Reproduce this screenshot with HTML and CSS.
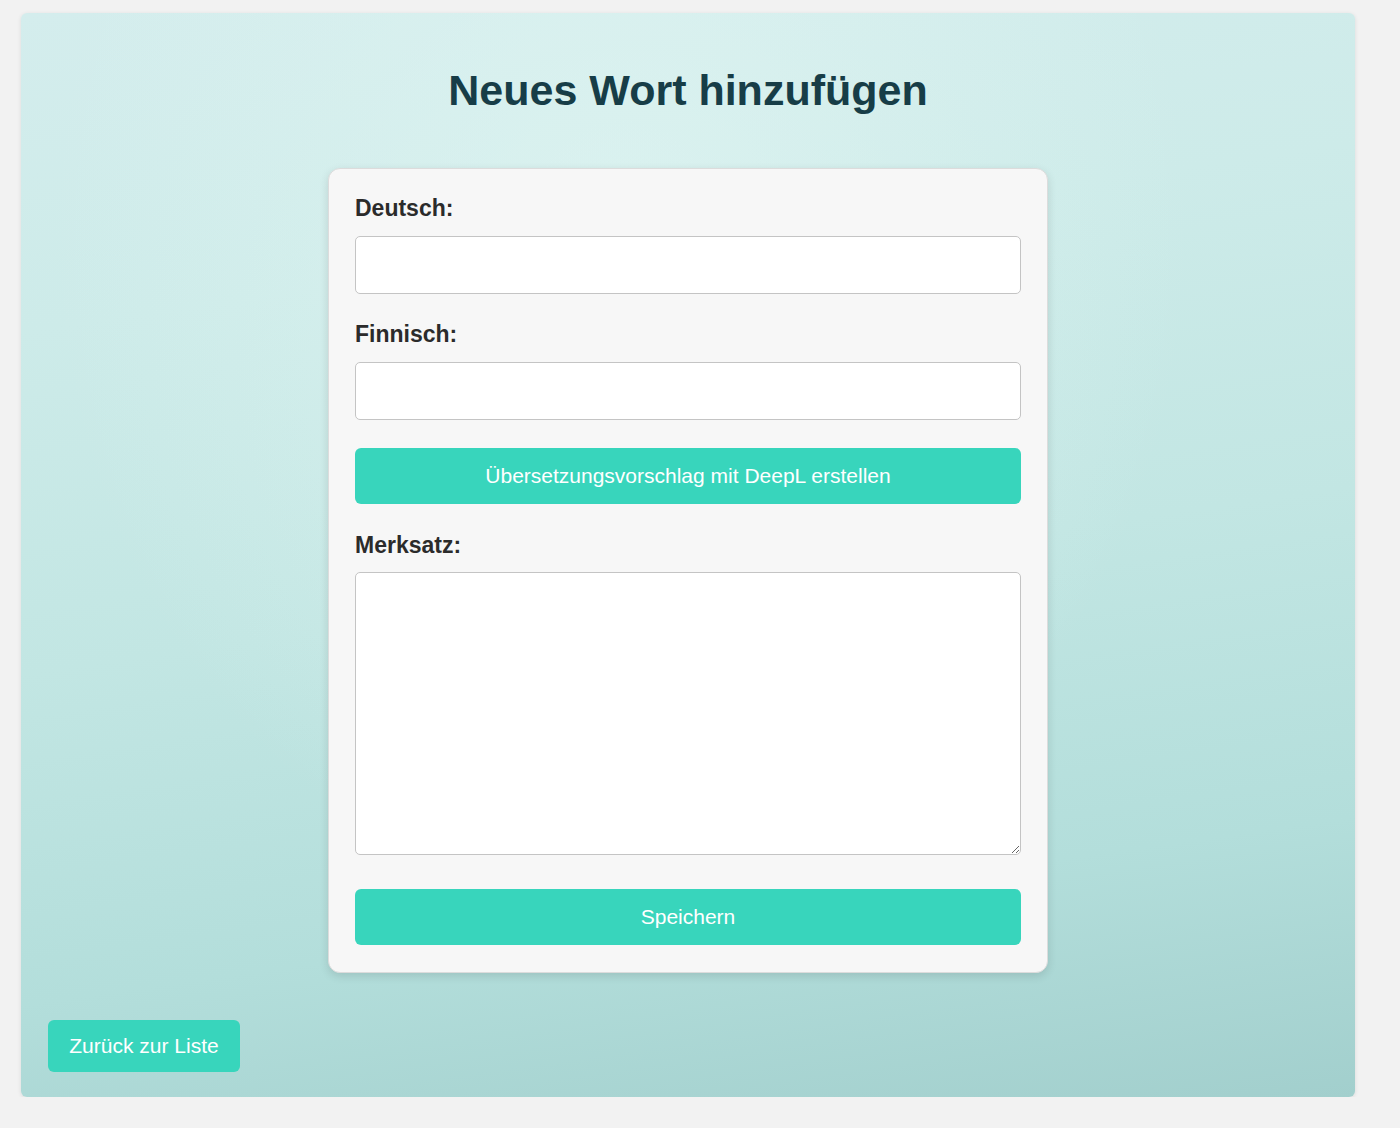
FILE: index.html
```html
<!DOCTYPE html>
<html lang="de">
<head>
<meta charset="utf-8">
<title>Neues Wort hinzufügen</title>
<link rel="stylesheet" href="styles.css">
</head>
<body>
<div class="page">
  <h1 class="title">Neues Wort hinzufügen</h1>
  <form class="card">
    <div class="group">
      <label class="label" for="de">Deutsch:</label>
      <input class="field" id="de" type="text">
    </div>
    <div class="group">
      <label class="label" for="fi">Finnisch:</label>
      <input class="field" id="fi" type="text">
    </div>
    <button class="btn btn-wide btn-deepl" type="button">Übersetzungsvorschlag mit DeepL erstellen</button>
    <div class="group group-text">
      <label class="label label-text" for="ms">Merksatz:</label>
      <textarea class="field area" id="ms"></textarea>
    </div>
    <button class="btn btn-wide" type="submit">Speichern</button>
  </form>
  <div class="footer">
    <a class="btn btn-back" href="#">Zurück zur Liste</a>
  </div>
</div>
</body>
</html>
```

FILE: styles.css
```css
html, body {
  margin: 0;
  padding: 0;
}
body {
  background: #f2f2f2;
  font-family: "Liberation Sans", Arial, sans-serif;
  padding: 13px 0 0 21px;
}
.page {
  width: 1334px;
  height: 1084px;
  box-sizing: border-box;
  border-radius: 6px;
  background:
    radial-gradient(ellipse at 45% 20%, rgba(226, 246, 243, 0.6), rgba(226, 246, 243, 0) 55%),
    linear-gradient(172deg, #d4eded 0%, #cdebe9 25%, #c2e6e3 52%, #b3dedb 78%, #a2cfcd 100%);
  box-shadow: 0 1px 4px rgba(0, 0, 0, 0.1);
  padding: 53px 27px 25px;
  display: flex;
  flex-direction: column;
}
.title {
  margin: 0;
  text-align: center;
  font-size: 43px;
  line-height: 48px;
  font-weight: bold;
  color: #173d47;
}
.card {
  align-self: center;
  width: 720px;
  box-sizing: border-box;
  margin-top: 54px;
  padding: 26px 26px 27px;
  background: #f7f7f7;
  border-radius: 12px;
  border: 1px solid #dcdcdc;
  box-shadow: 0 3px 10px rgba(0, 0, 0, 0.12);
  display: flex;
  flex-direction: column;
}
.group {
  display: flex;
  flex-direction: column;
  margin-bottom: 27px;
}
.group-text {
  margin-bottom: 34px;
}
.label {
  font-size: 23px;
  line-height: 26px;
  font-weight: bold;
  color: #2b2b2b;
  margin-bottom: 15px;
}
.label-text {
  margin-bottom: 14px;
}
.field {
  display: block;
  height: 58px;
  box-sizing: border-box;
  border: 1px solid #c4c4c4;
  border-radius: 5px;
  background: #fff;
  font-family: inherit;
  font-size: 18px;
  padding: 8px 12px;
  margin: 0;
}
.area {
  height: 283px;
  resize: vertical;
}
.btn {
  display: block;
  box-sizing: border-box;
  border: none;
  border-radius: 6px;
  background: #38d5bc;
  color: #fff;
  font-family: inherit;
  font-size: 21px;
  line-height: 24px;
  text-align: center;
  text-decoration: none;
  cursor: pointer;
}
.btn-wide {
  width: 100%;
  height: 56px;
  padding: 0;
}
.btn-deepl {
  margin-top: 1px;
  margin-bottom: 28px;
}
.footer {
  margin-top: auto;
  display: flex;
}
.btn-back {
  padding: 14px 20px;
  height: 52px;
  width: 192px;
}
```
